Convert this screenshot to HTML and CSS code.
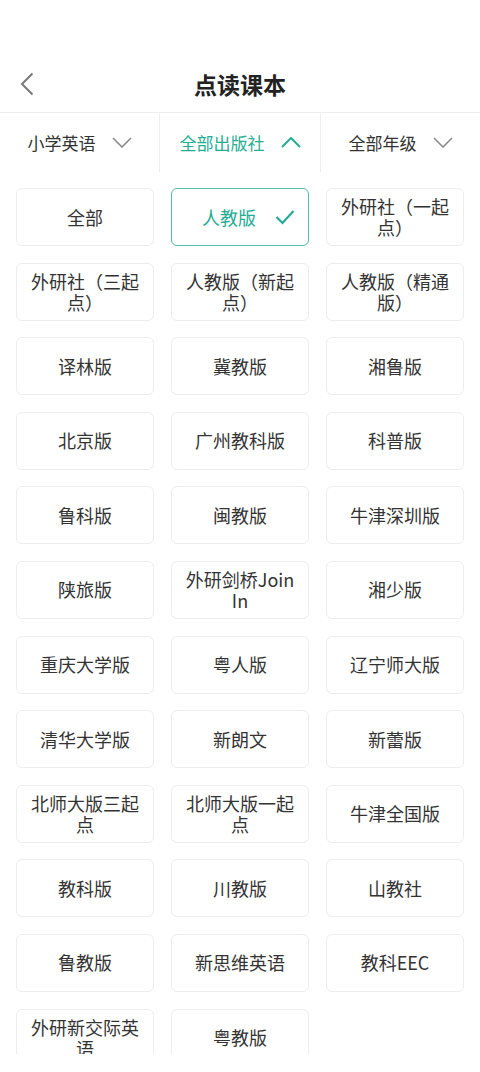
FILE: index.html
```html
<!DOCTYPE html>
<html lang="zh-CN">
<head>
  <meta charset="UTF-8">
  <meta name="viewport" content="width=device-width, initial-scale=1.0">
  <link rel="stylesheet" href="styles.css">
</head>
<body>
  <div class="status"></div>
  <div class="titlebar">
    <span class="back">
      <svg width="14" height="24" viewBox="0 0 14 24"><polyline points="12.5,1.5 2,12 12.5,22.5" fill="none" stroke="#7a7a7a" stroke-width="2"/></svg>
    </span>
    <h1>点读课本</h1>
  </div>

  <div class="filters">
    <div class="filter">
      <span>小学英语</span>
      <svg width="20" height="11" viewBox="0 0 20 11"><polyline points="1,1 10,10 19,1" fill="none" stroke="#8a8a8a" stroke-width="1.6"/></svg>
    </div>
    <div class="filter active">
      <span>全部出版社</span>
      <svg width="20" height="11" viewBox="0 0 20 11"><polyline points="1,10 10,1 19,10" fill="none" stroke="#25ad93" stroke-width="2"/></svg>
    </div>
    <div class="filter">
      <span>全部年级</span>
      <svg width="20" height="11" viewBox="0 0 20 11"><polyline points="1,1 10,10 19,1" fill="none" stroke="#8a8a8a" stroke-width="1.6"/></svg>
    </div>
  </div>

  <div class="content">
    <div class="grid">
      <div class="card">全部</div>
      <div class="card selected">
        <span>人教版</span>
        <svg class="check" width="20" height="16" viewBox="0 0 20 16"><polyline points="1.5,8 7.5,14 18.5,2" fill="none" stroke="#25ad93" stroke-width="2.2"/></svg>
      </div>
      <div class="card">外研社（一起点）</div>
      <div class="card">外研社（三起点）</div>
      <div class="card">人教版（新起点）</div>
      <div class="card">人教版（精通版）</div>
      <div class="card">译林版</div>
      <div class="card">冀教版</div>
      <div class="card">湘鲁版</div>
      <div class="card">北京版</div>
      <div class="card">广州教科版</div>
      <div class="card">科普版</div>
      <div class="card">鲁科版</div>
      <div class="card">闽教版</div>
      <div class="card">牛津深圳版</div>
      <div class="card">陕旅版</div>
      <div class="card">外研剑桥Join In</div>
      <div class="card">湘少版</div>
      <div class="card">重庆大学版</div>
      <div class="card">粤人版</div>
      <div class="card">辽宁师大版</div>
      <div class="card">清华大学版</div>
      <div class="card">新朗文</div>
      <div class="card">新蕾版</div>
      <div class="card">北师大版三起点</div>
      <div class="card">北师大版一起点</div>
      <div class="card">牛津全国版</div>
      <div class="card">教科版</div>
      <div class="card">川教版</div>
      <div class="card">山教社</div>
      <div class="card">鲁教版</div>
      <div class="card">新思维英语</div>
      <div class="card">教科EEC</div>
      <div class="card">外研新交际英语</div>
      <div class="card">粤教版</div>
    </div>
  </div>
</body>
</html>
```

FILE: styles.css
```css
body {
  margin: 0;
  background-color: #fff;
  font-family: "Noto Sans CJK SC", "Noto Sans", sans-serif;
  color: #333;
  height: 1072px;
  overflow: hidden;
}

.status {
  height: 56px;
}

.titlebar {
  height: 56px;
  display: flex;
  align-items: center;
  justify-content: center;
  border-bottom: 1px solid #eeeeee;
  position: relative;
}

.back {
  position: absolute;
  left: 20px;
  top: 16px;
  display: flex;
}

h1 {
  margin: 0;
  font-size: 23px;
  font-weight: bold;
  color: #222;
}

.filters {
  display: grid;
  grid-template-columns: 159px 161px 160px;
  height: 59px;
}

.filter {
  display: flex;
  align-items: center;
  justify-content: center;
  gap: 16px;
  font-size: 17px;
  color: #333;
}

.filter + .filter {
  border-left: 1px solid #eeeeee;
}

.filter.active {
  color: #25ad93;
}

.content {
  height: 882px;
  overflow: hidden;
}

.grid {
  display: grid;
  grid-template-columns: repeat(3, 138px);
  grid-auto-rows: 58px;
  column-gap: 17px;
  row-gap: 16.6px;
  padding: 16px 16px;
}

.card {
  box-sizing: border-box;
  border: 1px solid #ededed;
  border-radius: 6px;
  display: flex;
  align-items: center;
  justify-content: center;
  text-align: center;
  padding: 0 12px;
  font-size: 18px;
  line-height: 21px;
  color: #333;
  position: relative;
}

.card.selected {
  border: 1.5px solid #4fbca7;
  color: #25ad93;
  padding-right: 34px;
}

.check {
  position: absolute;
  right: 13px;
  top: 20px;
}
```
